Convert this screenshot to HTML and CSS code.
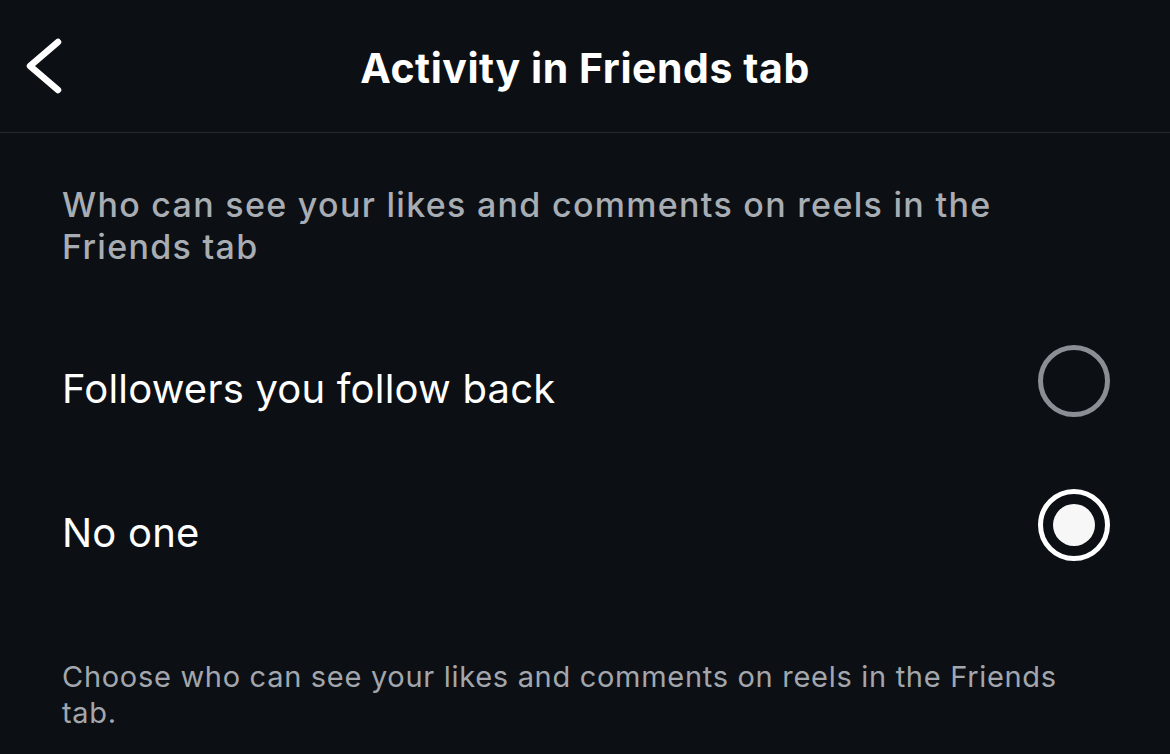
FILE: index.html
```html
<!DOCTYPE html>
<html lang="en">
<head>
  <meta charset="UTF-8">
  <meta name="viewport" content="width=device-width, initial-scale=1.0">
  <title>Activity in Friends tab</title>
  <link rel="stylesheet" href="styles.css">
</head>
<body>

  <header class="topbar">
    <button class="back" aria-label="Back">
      <svg width="40" height="64" viewBox="0 0 40 64">
        <path d="M34 12 L6 36 L34 60" fill="none" stroke="#fff" stroke-width="6.5" stroke-linecap="round" stroke-linejoin="round"/>
      </svg>
    </button>
    <h1>Activity in Friends tab</h1>
  </header>

  <main class="content">
    <p class="question">Who can see your likes and comments on reels in the Friends tab</p>

    <div class="options">
      <label class="option">
        <span>Followers you follow back</span>
        <span class="radio"></span>
      </label>
      <label class="option">
        <span>No one</span>
        <span class="radio checked"></span>
      </label>
    </div>

    <p class="note">Choose who can see your likes and comments on reels in the Friends tab.</p>
  </main>

</body>
</html>
```

FILE: styles.css
```css
body {
  margin: 0;
  background-color: #0c1014;
  color: #f5f5f5;
  font-family: 'Inter', 'Noto Sans', sans-serif;
}

.topbar {
  display: flex;
  align-items: center;
  justify-content: center;
  height: 132px;
  border-bottom: 1px solid #262a2f;
  position: relative;
}

.topbar h1 {
  margin: 0;
  padding-top: 4px;
  font-size: 41px;
  font-weight: 700;
  color: #fff;
  letter-spacing: 0.55px;
}

.back {
  position: absolute;
  left: 24px;
  top: 30px;
  background: none;
  border: 0;
  padding: 0;
  display: flex;
}

.content {
  padding: 0 60px 0 62px;
}

.question {
  margin: 51px 0 0;
  font-size: 34px;
  line-height: 42px;
  font-weight: 500;
  letter-spacing: 1.3px;
  color: #a8adb4;
}

.options {
  margin-top: 41px;
  display: flex;
  flex-direction: column;
}

.option {
  display: flex;
  align-items: center;
  justify-content: space-between;
  height: 144px;
  font-size: 40px;
  letter-spacing: 0.2px;
  color: #fff;
}

.option span:first-child {
  padding-top: 14px;
}

.radio {
  width: 62px;
  height: 62px;
  border: 5px solid #8b8e94;
  border-radius: 50%;
  box-sizing: content-box;
  position: relative;
}

.radio.checked {
  border-color: #fff;
}

.radio.checked::after {
  content: '';
  position: absolute;
  top: 10px;
  left: 10px;
  width: 42px;
  height: 42px;
  border-radius: 50%;
  background: #f7f7f7;
}

.note {
  margin: 62px 0 0;
  padding-right: 10px;
  font-size: 29px;
  line-height: 36px;
  letter-spacing: 0.7px;
  color: #a3a7ad;
}
```
